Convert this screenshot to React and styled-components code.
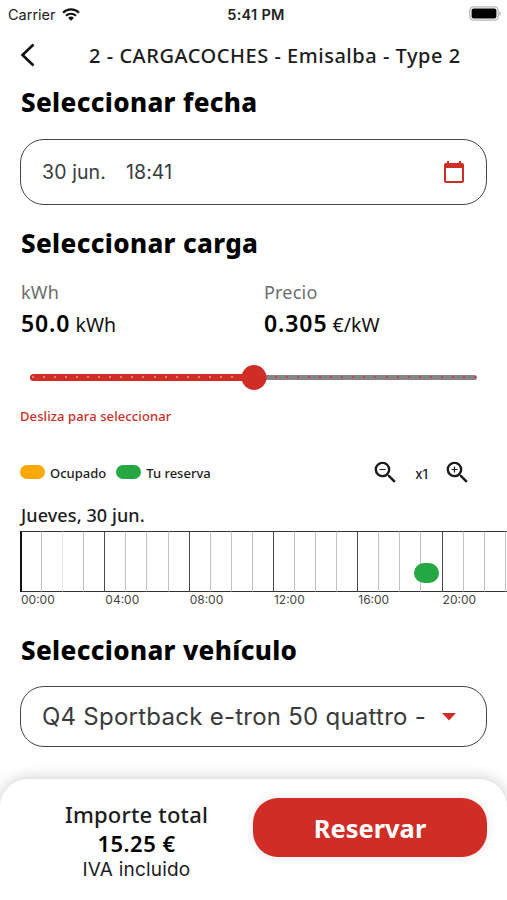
import React, { useState } from "react";
import styled, { createGlobalStyle, css } from "styled-components";
import { MdCalendarToday, MdZoomIn, MdZoomOut } from "react-icons/md";

const RED = "#d12d27";
const GREEN = "#25a744";
const ORANGE = "#ffa80a";

const HOUR_WIDTH = 21.08;
const MAX_CHARGE = 100;
const CHARGE_STEP = 2.5;

const GlobalStyle = createGlobalStyle`
  *,
  *::before {
    box-sizing: border-box;
  }

  body {
    margin: 0;
    background: #fff;
    color: #1c1c1e;
    font-family: "Noto Sans", "Open Sans", sans-serif;
  }

  button {
    border: 0;
    padding: 0;
    background: none;
    color: inherit;
    font: inherit;
  }
`;

const systemFont = css`
  font-family: Inter, "Liberation Sans", sans-serif;
`;

const Screen = styled.div`
  display: flex;
  flex-direction: column;
  width: 507px;
  height: 900px;
  overflow: hidden;
`;

const StatusBar = styled.header`
  ${systemFont}
  display: grid;
  grid-template-columns: 1fr auto 1fr;
  align-items: center;
  height: 28px;
  padding: 0 6px 0 8px;
  font-size: 14.5px;
  color: #222;

  & svg {
    display: block;
  }
`;

const Carrier = styled.div`
  display: flex;
  align-items: center;
  gap: 6px;
`;

const Clock = styled.div`
  padding-left: 3px;
  font-size: 14.5px;
  font-weight: 600;
  letter-spacing: 0.3px;
`;

const Battery = styled.div`
  justify-self: end;
  margin-top: -2px;
`;

const NavBar = styled.nav`
  display: flex;
  align-items: center;
  height: 56px;
  padding: 0 20px;
`;

const BackButton = styled.button`
  width: 16px;
  height: 26px;
  margin-top: -2px;

  & svg {
    display: block;
  }
`;

const Title = styled.h1`
  flex: 1;
  margin: 0 0 0 53px;
  font-size: 20px;
  font-weight: 500;
  letter-spacing: 0.53px;
  line-height: 28px;
  white-space: nowrap;
`;

const Content = styled.main`
  flex: 1;
  padding: 0 20px;
`;

const Heading = styled.h2`
  margin: 0;
  padding-left: 1px;
  font-size: 26px;
  font-weight: 800;
  line-height: 36px;
  letter-spacing: 0.35px;
  color: #000;
`;

const Section = styled.section`
  margin-top: ${({ $top }) => $top || 0}px;
`;

const Field = styled.div`
  ${systemFont}
  display: flex;
  align-items: center;
  justify-content: space-between;
  height: ${({ $height }) => $height}px;
  margin-top: ${({ $top }) => $top}px;
  padding: 0 ${({ $right }) => $right}px 0 21px;
  border: 1px solid #444;
  border-radius: 24px;
  font-size: ${({ $size }) => $size}px;
  letter-spacing: ${({ $spacing }) => $spacing}px;
  color: #3a3a3c;
  white-space: nowrap;

  & svg {
    display: block;
    color: ${RED};
  }
`;

const DateValue = styled.div`
  display: flex;
  gap: 20px;
`;

const Figures = styled.div`
  display: grid;
  grid-template-columns: 243px 1fr;
  margin-top: 19px;
  padding-left: 1px;
`;

const FigureLabel = styled.div`
  font-size: 18px;
  line-height: 24px;
  letter-spacing: 0.2px;
  color: #6d6d6d;
`;

const FigureValue = styled.div`
  margin-top: 3px;
  font-size: 19.5px;
  line-height: 36px;
  color: #111;

  & strong {
    font-size: 23px;
    font-weight: 600;
    line-height: 1;
    letter-spacing: 0.9px;
    color: #000;
  }
`;

const Slider = styled.div`
  position: relative;
  display: flex;
  align-items: center;
  height: 26px;
  margin: 21px 10px 0;
`;

const Track = styled.div`
  display: flex;
  flex: 1;
  align-items: center;
  justify-content: space-between;
  height: 5px;
  padding: 0 1px 0 2px;
  border-radius: 3px;
  background: #858585;
`;

const TrackFill = styled.div`
  position: absolute;
  left: 0;
  height: 7px;
  border-radius: 4px;
  background: ${RED};
`;

const Tick = styled.i`
  z-index: 1;
  width: 2px;
  height: 2px;
  border-radius: 1px;
  background: ${({ $passed }) => ($passed ? "#c9aaa0" : "#d2332f")};
`;

const Thumb = styled.div`
  position: absolute;
  z-index: 2;
  width: 25px;
  height: 25px;
  border-radius: 50%;
  background: ${RED};
  transform: translateX(-50%);
`;

const Hint = styled.p`
  margin: 16px 0 0;
  font-size: 13px;
  font-weight: 500;
  line-height: 20px;
  letter-spacing: 0.1px;
  color: ${RED};
`;

const Toolbar = styled.div`
  display: flex;
  align-items: center;
  justify-content: space-between;
  height: 30px;
  margin-top: 32px;
  padding-right: 15px;
`;

const Legend = styled.div`
  display: flex;
  gap: 10px;
`;

const LegendItem = styled.div`
  display: flex;
  align-items: center;
  gap: 5px;
  font-size: 13px;
  font-weight: 500;
  line-height: 20px;

  &::before {
    content: "";
    width: 25px;
    height: 14px;
    margin-top: -3px;
    border-radius: 7px;
    background: ${({ $color }) => $color};
  }
`;

const Zoom = styled.div`
  ${systemFont}
  display: flex;
  align-items: center;
  margin-top: -2px;
  font-size: 13px;
  font-weight: 500;

  & span {
    width: 43px;
    padding-top: 3px;
    text-align: center;
  }

  & svg {
    display: block;
  }
`;

const Day = styled.h3`
  margin: 15px 0 0;
  padding-left: 1px;
  font-size: 18px;
  font-weight: 500;
  line-height: 24px;
  letter-spacing: 0.1px;
`;

const Timeline = styled.div`
  position: relative;
  display: flex;
  width: max-content;
  margin-top: 4px;
`;

const Hour = styled.div`
  ${systemFont}
  width: ${HOUR_WIDTH}px;
  font-size: 12px;
  line-height: 16px;
  color: #444;

  &::before {
    content: "";
    display: block;
    height: 61px;
    border: solid #333;
    border-width: 1px 0;
    border-left: ${({ $index }) => ($index === 0 ? 2 : 1)}px solid
      ${({ $index }) => {
        if ($index === 0) return "#111";
        if ($index === 2) return "#e6e6e6";
        return $index % 4 === 0 ? "#4a4a4a" : "#c2c2c2";
      }};
  }

  & span {
    display: block;
    width: 60px;
    padding-left: 1px;
  }
`;

const Booking = styled.div`
  position: absolute;
  top: 32px;
  width: 25px;
  height: 20px;
  border-radius: 10px;
  background: ${GREEN};
`;

const Footer = styled.footer`
  display: flex;
  align-items: flex-start;
  height: 121px;
  padding: 19px 20px 0;
  border-radius: 28px 28px 0 0;
  background: #fff;
  box-shadow: 0 0 16px rgba(0, 0, 0, 0.22);
`;

const Total = styled.div`
  flex: 1;
  padding: 2px 0 0;
  text-align: center;
  color: #1c1c1e;
`;

const TotalLabel = styled.div`
  font-size: 22px;
  font-weight: 500;
  line-height: 29px;
  letter-spacing: 0.2px;
`;

const TotalAmount = styled.div`
  font-size: 22px;
  font-weight: 600;
  line-height: 29px;
  letter-spacing: 0.5px;
  color: #000;
`;

const TotalNote = styled.div`
  ${systemFont}
  font-size: 19px;
  line-height: 23px;
  letter-spacing: 0.2px;
`;

const ReserveButton = styled.button`
  width: 234px;
  height: 59px;
  border-radius: 25px;
  background: ${RED};
  box-shadow: 0 0 12px rgba(0, 0, 0, 0.1);
  color: #fff;
  font-size: 25.5px;
  font-weight: 700;
`;

function WifiIcon() {
  return (
    <svg width="18" height="13" viewBox="0 0 18 13" fill="none">
      <g stroke="#111" strokeWidth="2.1">
        <path d="M1 4.7a11.4 11.4 0 0 1 16 0" />
        <path d="M4 7.8a7.2 7.2 0 0 1 10 0" />
      </g>
      <path d="M9 12.8 6.1 9.9a4.2 4.2 0 0 1 5.8 0Z" fill="#111" />
    </svg>
  );
}

function BatteryIcon() {
  return (
    <svg width="32" height="15" viewBox="0 0 32 15">
      <rect
        x="0.8"
        y="0.8"
        width="28.4"
        height="13.4"
        rx="4"
        fill="#fff"
        stroke="#b5b5b5"
        strokeWidth="1.3"
      />
      <rect x="2.6" y="2.6" width="24.8" height="9.8" rx="2" fill="#000" />
      <path d="M30.5 5.4c1.6.6 1.6 3.6 0 4.2Z" fill="#999" />
    </svg>
  );
}

function ChargeSlider({ value }) {
  const ticks = Array.from(
    { length: MAX_CHARGE / CHARGE_STEP + 1 },
    (_, i) => i * CHARGE_STEP
  );
  const position = `${(value / MAX_CHARGE) * 100}%`;

  return (
    <Slider>
      <TrackFill style={{ width: position }} />
      <Track>
        {ticks.map((tick) => (
          <Tick key={tick} $passed={tick < value} />
        ))}
      </Track>
      <Thumb style={{ left: position }} />
    </Slider>
  );
}

function Schedule({ bookingStart }) {
  const hours = Array.from({ length: 24 }, (_, i) => i);

  return (
    <Timeline>
      {hours.map((hour) => (
        <Hour key={hour} $index={hour}>
          {hour % 4 === 0 ? (
            <span>{String(hour).padStart(2, "0")}:00</span>
          ) : null}
        </Hour>
      ))}
      <Booking style={{ left: bookingStart * HOUR_WIDTH }} />
    </Timeline>
  );
}

export default function App() {
  const [charge] = useState(50);
  const price = 0.305;

  return (
    <Screen>
      <GlobalStyle />
      <StatusBar>
        <Carrier>
          Carrier <WifiIcon />
        </Carrier>
        <Clock>5:41 PM</Clock>
        <Battery>
          <BatteryIcon />
        </Battery>
      </StatusBar>
      <NavBar>
        <BackButton aria-label="Atrás">
          <svg width="16" height="26" viewBox="0 0 16 26" fill="none">
            <path d="M13.5 2.5 2.5 13l11 10.5" stroke="#111" strokeWidth="2.6" />
          </svg>
        </BackButton>
        <Title>2 - CARGACOCHES - Emisalba - Type 2</Title>
      </NavBar>

      <Content>
        <Section>
          <Heading>Seleccionar fecha</Heading>
          <Field $height={66} $top={19} $right={20} $size={19.5} $spacing={0.1}>
            <DateValue>
              <span>30 jun.</span>
              <span>18:41</span>
            </DateValue>
            <MdCalendarToday size={24} />
          </Field>
        </Section>

        <Section $top={20}>
          <Heading>Seleccionar carga</Heading>
          <Figures>
            <div>
              <FigureLabel>kWh</FigureLabel>
              <FigureValue>
                <strong>{charge.toFixed(1)}</strong> kWh
              </FigureValue>
            </div>
            <div>
              <FigureLabel>Precio</FigureLabel>
              <FigureValue>
                <strong>{price}</strong> €/kW
              </FigureValue>
            </div>
          </Figures>
          <ChargeSlider value={charge} />
          <Hint>Desliza para seleccionar</Hint>
          <Toolbar>
            <Legend>
              <LegendItem $color={ORANGE}>Ocupado</LegendItem>
              <LegendItem $color={GREEN}>Tu reserva</LegendItem>
            </Legend>
            <Zoom>
              <MdZoomOut size={29} />
              <span>x1</span>
              <MdZoomIn size={29} />
            </Zoom>
          </Toolbar>
          <Day>Jueves, 30 jun.</Day>
          <Schedule bookingStart={18.7} />
        </Section>

        <Section $top={24}>
          <Heading>Seleccionar vehículo</Heading>
          <Field $height={61} $top={18} $right={30} $size={24} $spacing={0.25}>
            <span>Q4 Sportback e-tron 50 quattro -</span>
            <svg width="14" height="8" viewBox="0 0 14 8">
              <path d="M0 0h14L7 7.5Z" fill="currentColor" />
            </svg>
          </Field>
        </Section>
      </Content>

      <Footer>
        <Total>
          <TotalLabel>Importe total</TotalLabel>
          <TotalAmount>{(charge * price).toFixed(2)} €</TotalAmount>
          <TotalNote>IVA incluido</TotalNote>
        </Total>
        <ReserveButton>Reservar</ReserveButton>
      </Footer>
    </Screen>
  );
}
